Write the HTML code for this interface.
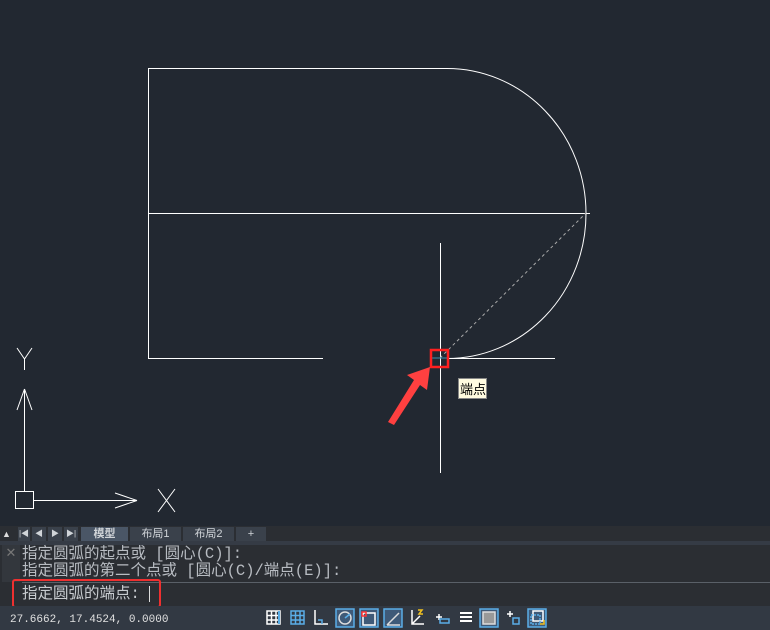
<!DOCTYPE html>
<html><head><meta charset="utf-8"><style>
body{margin:0;width:770px;height:630px;overflow:hidden;background:#222831;font-family:"Liberation Sans","Noto Sans CJK SC",sans-serif;position:relative}
.abs{position:absolute}
.cmd{font-family:"Liberation Mono","Noto Sans CJK SC",monospace;color:#b8bcc2;font-size:15.5px;line-height:15px;white-space:nowrap}
.tab{position:absolute;top:527px;height:14px;background:#3a414b;color:#d0d4d8;font-size:11px;line-height:14px;text-align:center}
</style></head><body>
<svg class="abs" style="left:0;top:0" width="770" height="526">
<g stroke="#fff" stroke-width="1" fill="none" shape-rendering="crispEdges">
<path d="M148.5 358V68.5H447"/>
<path d="M148 213.5H590"/>
<path d="M148 358.5H323M447 358.5H555"/>
<path d="M440.5 243V473"/>
<path d="M24.5 389V491M15.5 491.5h18v17h-18zM34 500.5H137"/>
</g>
<g stroke="#fff" stroke-width="1" fill="none">
<path d="M447 68.5A139 145 0 0 1 447 358.5"/>
<path d="M24.5 389L17 410M24.5 389L32 410M137 500.5L115 493M137 500.5L115 508"/>
<path d="M17 348L24.5 359L32 348M24.5 359V370M158 489L175 512M175 489L158 512"/>
<path d="M440 358L586 213" stroke="#aaa" stroke-dasharray="3 3"/>
<path d="M432 358H448" stroke="#3a8fb0"/>
</g>
<rect x="431" y="350" width="17" height="17" fill="none" stroke="#ff2020" stroke-width="2.5"/>
<polygon points="388,422 414,380 407,375 430,367 427,390 420,385 394,425" fill="#ff4040"/>
<rect x="458.5" y="378.5" width="28" height="20" fill="#fffbe0" stroke="#888"/>
<text x="460" y="394" font-size="13" fill="#000" font-family="Noto Sans CJK SC,sans-serif">端点</text>
</svg>
<div class="abs" style="left:0;top:526px;width:770px;height:15px;background:#2b2e33"></div>
<div class="abs" style="left:2px;top:529px;color:#ddd;font-size:9px">▲</div>
<div class="tab" style="left:18px;width:12px;font-size:8px">|◀</div>
<div class="tab" style="left:32px;width:14px;font-size:8px">◀</div>
<div class="tab" style="left:48px;width:14px;font-size:8px">▶</div>
<div class="tab" style="left:64px;width:14px;font-size:8px">▶|</div>
<div class="tab" style="left:81px;width:47px;background:#4a5666;font-weight:bold">模型</div>
<div class="tab" style="left:130px;width:51px">布局1</div>
<div class="tab" style="left:183px;width:51px">布局2</div>
<div class="tab" style="left:236px;width:30px">+</div>
<div class="abs" style="left:0;top:541px;width:770px;height:4px;background:#353b45"></div>
<div class="abs" style="left:0;top:545px;width:770px;height:61px;background:#2b2e33"></div>
<div class="abs" style="left:2px;top:545px;width:18px;height:37px;background:#33373d;color:#777;font-size:13px;text-align:center">✕</div>
<div class="abs" style="left:22px;top:582px;width:748px;height:1px;background:#5a6068"></div>
<div class="abs cmd" style="left:22px;top:547px">指定圆弧的起点或 [圆心(C)]:</div>
<div class="abs cmd" style="left:22px;top:564px">指定圆弧的第二个点或 [圆心(C)/端点(E)]:</div>
<div class="abs cmd" style="left:22px;top:586px;color:#c8ccd0">指定圆弧的端点: <span style="display:inline-block;width:1px;height:16px;background:#ddd;vertical-align:middle"></span></div>
<div class="abs" style="left:12px;top:579px;width:149px;height:29px;border:2px solid #ee3030;border-radius:3px;box-sizing:border-box"></div>
<div class="abs" style="left:0;top:606px;width:770px;height:24px;background:#323943"></div>
<div class="abs" style="left:10px;top:614px;color:#e0e0e0;font-size:11px;font-family:'Liberation Mono',monospace">27.6662, 17.4524, 0.0000</div>
<svg class="abs" style="left:250px;top:606px" width="300" height="24">
<g fill="none" stroke-width="1.5">
<path d="M17 5h13v13H17zM17 9.5h13M17 14h13M21.5 5v13M26 5v13" stroke="#fff"/><path d="M29 5v13" stroke="#5aaee8" stroke-width="2"/>
<path d="M41 5h13v13H41zM41 9.5h13M41 14h13M45.5 5v13M50 5v13" stroke="#5aaee8"/>
<path d="M65 4v14h13" stroke="#fff"/><path d="M68 14h4v4" stroke="#5aaee8"/>
<rect x="86" y="3" width="18" height="18" fill="#3f5a78" stroke="#5aaee8"/><circle cx="95" cy="12" r="6" stroke="#ddd"/><path d="M95 12l5-4" stroke="#5aaee8"/>
<rect x="110" y="3" width="18" height="18" fill="#3f5a78" stroke="#5aaee8"/><rect x="113" y="7" width="12" height="12" stroke="#fff"/><rect x="112" y="6" width="4" height="4" stroke="#f33"/>
<rect x="134" y="3" width="18" height="18" fill="#3f5a78" stroke="#5aaee8"/><path d="M137 19l12-12M137 19h13" stroke="#ddd"/>
<path d="M162 4v14h12M162 18l8-8" stroke="#fff"/><path d="M168 4l4 0-3 4 4 0" stroke="#f0c020"/>
<path d="M186 11h6M189 8v6" stroke="#fff"/><rect x="190" y="13" width="9" height="4" stroke="#5aaee8"/>
<path d="M210 7h12M210 11h12M210 15h12" stroke="#fff" stroke-width="2"/>
<rect x="230" y="3" width="18" height="18" fill="#3f5a78" stroke="#5aaee8"/><rect x="233" y="6" width="12" height="12" fill="#999" stroke="#ddd"/>
<path d="M257 8h6M260 5v6" stroke="#fff"/><rect x="263" y="12" width="6" height="6" stroke="#5aaee8"/>
<rect x="278" y="3" width="18" height="18" fill="#3f5a78" stroke="#5aaee8"/><path d="M283 5h10v10H283z" stroke="#fff"/><rect x="281" y="9" width="9" height="9" stroke="#5aaee8" stroke-dasharray="2 1"/><path d="M294 14v4h-4" stroke="#f0c020"/>
</g></svg>
</body></html>
